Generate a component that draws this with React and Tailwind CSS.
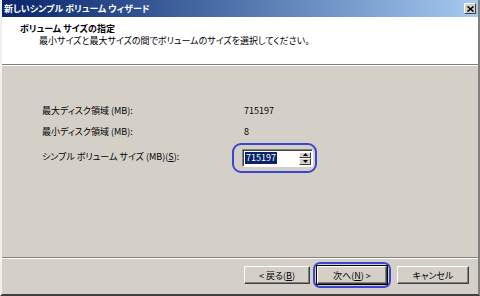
import React from 'react';

const jp = "font-['Noto_Sans_CJK_JP',sans-serif] [font-feature-settings:'palt']";

const Btn = ({ children, className = '' }) => (
  <div
    className={`h-[18px] bg-[#d4d0c8] border border-t-white border-l-white border-r-[#404040] border-b-[#404040] shadow-[inset_-1px_-1px_0_#808080] flex items-center justify-center text-[9px] leading-none text-black ${className}`}
  >
    {children}
  </div>
);

const Spin = () => (
  <div className="flex flex-col w-[12px] h-[13px] mr-[1px] gap-0">
    <div className="flex-1 bg-[#d4d0c8] border border-t-white border-l-white border-r-[#404040] border-b-[#404040] flex items-center justify-center">
      <svg width="5" height="3" viewBox="0 0 5 3"><path d="M2.5 0L5 3H0z" fill="#000" /></svg>
    </div>
    <div className="flex-1 bg-[#d4d0c8] border border-t-white border-l-white border-r-[#404040] border-b-[#404040] flex items-center justify-center">
      <svg width="5" height="3" viewBox="0 0 5 3"><path d="M0 0H5L2.5 3z" fill="#000" /></svg>
    </div>
  </div>
);

export default function App() {
  return (
    <div className={`w-[480px] h-[296px] flex flex-col bg-[#d4d0c8] border-l-2 border-l-[#f2f0ec] border-r-2 border-r-[#808080] border-b-2 border-b-[#404040] ${jp}`}>
      {/* title bar */}
      <div className="h-[17px] shrink-0 flex items-center justify-between bg-linear-to-r from-[#0a246a] to-[#a6caf0] pl-[2px] pr-[2px]">
        <span className="text-white font-bold text-[9px] leading-none">新しいシンプル ボリューム ウィザード</span>
        <div className="w-[12px] h-[11px] bg-[#d4d0c8] border border-t-white border-l-white border-r-[#404040] border-b-[#404040] flex items-center justify-center">
          <svg width="7" height="6" viewBox="0 0 7 6">
            <path d="M0.5 0.5L6.5 5.5M6.5 0.5L0.5 5.5" stroke="#000" strokeWidth="1.6" />
          </svg>
        </div>
      </div>

      {/* header */}
      <div className="h-[48px] shrink-0 bg-white border-b border-b-[#808080] pl-[18px] pt-[6px]">
        <div className="text-[9px] font-bold leading-[12px] text-black">ボリューム サイズの指定</div>
        <div className="text-[9px] leading-[12px] text-black pl-[19px]">
          最小サイズと最大サイズの間でボリュームのサイズを選択してください。
        </div>
      </div>

      {/* body */}
      <div className="flex-1 border-t border-t-white border-b border-b-[#808080] pl-[40px] pt-[39px] text-[9px] text-black">
        <div className="flex h-[12px] items-center leading-[12px]">
          <span className="w-[202px]">最大ディスク領域 (MB):</span>
          <span>715197</span>
        </div>
        <div className="flex h-[12px] items-center leading-[12px] mt-[9px]">
          <span className="w-[202px]">最小ディスク領域 (MB):</span>
          <span>8</span>
        </div>
        <div className="flex items-center mt-[5px]">
          <span className="w-[190px] pb-[2px] leading-[12px]">
            シンプル ボリューム サイズ (MB)(<span className="underline">S</span>):
          </span>
          <div className="border-2 border-[#3a46d0] rounded-[9px] pl-[8px] pr-[2px] py-[4px]">
            <div className="w-[71px] h-[18px] bg-white border border-t-[#808080] border-l-[#808080] border-b-white border-r-white shadow-[inset_1px_1px_0_#404040] flex items-center justify-between pl-[2px]">
              <span className="bg-[#0a246a] text-white leading-[12px] px-[1px]">715197</span>
              <Spin />
            </div>
          </div>
        </div>
      </div>

      {/* footer */}
      <div className="h-[36px] shrink-0 border-t border-t-white flex items-start justify-end pt-[3px] pr-[9px]">
        <Btn className="w-[66px] mt-[4px]">
          &lt; 戻る(<span className="underline">B</span>)
        </Btn>
        <div className="ml-[3px] border-2 border-[#3a46d0] rounded-[7px] p-[1px]">
          <div className="border border-black">
            <Btn className="w-[70px] h-[18px]">
              次へ(<span className="underline">N</span>) &gt;
            </Btn>
          </div>
        </div>
        <Btn className="w-[72px] ml-[6px] mt-[4px]">キャンセル</Btn>
      </div>
    </div>
  );
}
